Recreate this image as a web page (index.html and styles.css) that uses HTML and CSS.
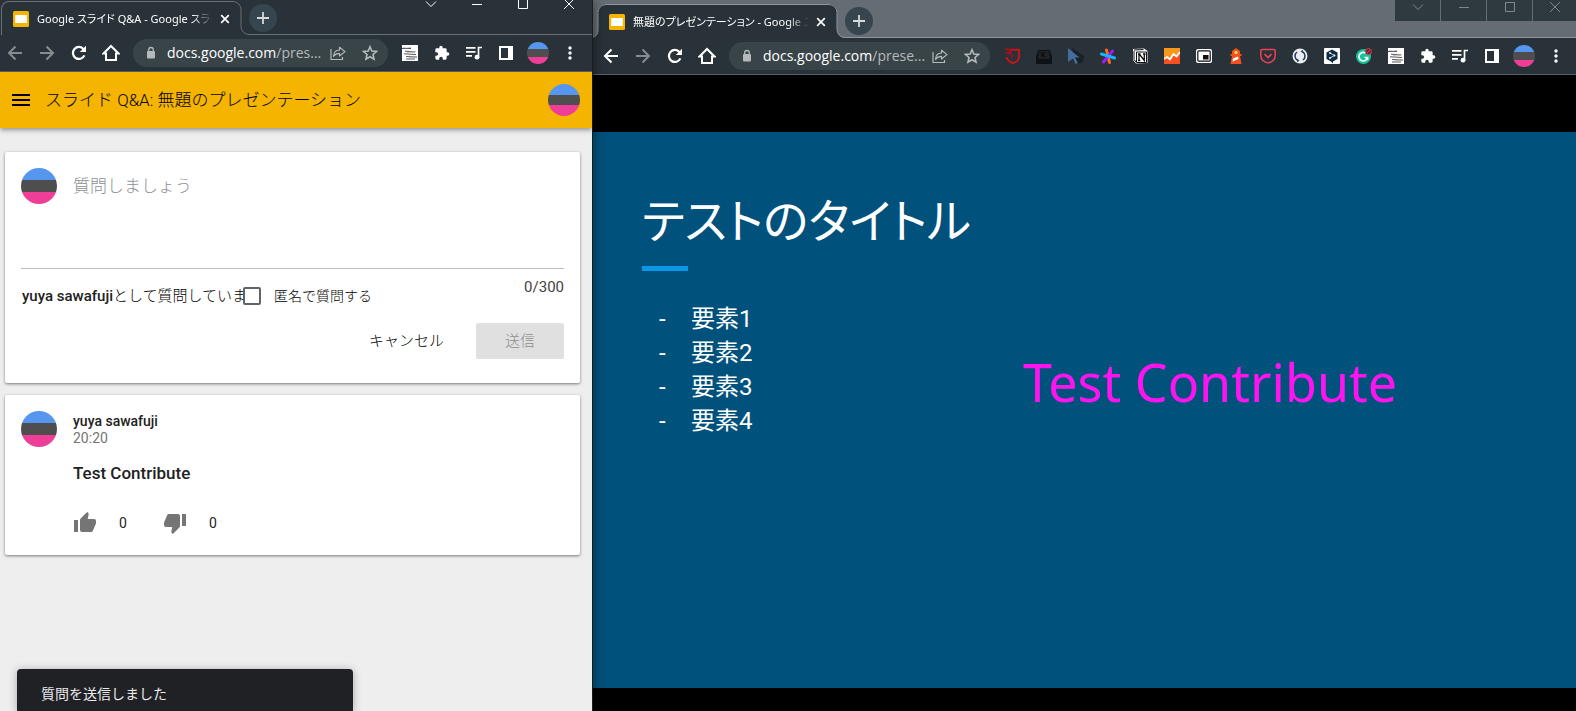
FILE: index.html
```html
<!DOCTYPE html>
<html lang="ja">
<head>
<meta charset="utf-8">
<title>スライド Q&amp;A</title>
<link rel="stylesheet" href="styles.css">
</head>
<body>
<svg class="sprite" aria-hidden="true">
  <symbol id="slides" viewBox="0 0 16 16"><rect width="16" height="16" rx="1.5" fill="#f5b400"/><rect x="2.2" y="4" width="11.6" height="8" fill="#fff"/></symbol>
  <symbol id="close" viewBox="0 0 10 10"><path d="M1.2 1.2l7.6 7.6M8.8 1.2L1.2 8.8" stroke="currentColor" stroke-width="1.7"/></symbol>
  <symbol id="plus" viewBox="0 0 12 12"><path d="M6 0v12M0 6h12" stroke="currentColor" stroke-width="1.8"/></symbol>
  <symbol id="back" viewBox="0 0 16 16"><path d="M15 8H2M8.5 1.5L2 8l6.500 6.500" fill="none" stroke="currentColor" stroke-width="2"/></symbol>
  <symbol id="forward" viewBox="0 0 16 16"><path d="M1 8h13M7.500 1.500L14 8l-6.500 6.500" fill="none" stroke="currentColor" stroke-width="2"/></symbol>
  <symbol id="reload" viewBox="0 0 16 16"><path d="M13.400 10.400A6 6 0 1 1 12.600 4.200" fill="none" stroke="currentColor" stroke-width="2.200"/><path d="M15 .8V7H8.800z" fill="currentColor"/></symbol>
  <symbol id="home" viewBox="0 0 18 18"><path d="M1.500 9.500L9 2l7.500 7.500H14V16H4V9.500z" fill="none" stroke="currentColor" stroke-width="2"/></symbol>
  <symbol id="lock" viewBox="0 0 10 14"><rect x="1" y="5" width="8" height="7.500" rx="1" fill="currentColor"/><path d="M2.700 6V3.800a2.300 2.300 0 0 1 4.600 0V6" fill="none" stroke="currentColor" stroke-width="1.300"/></symbol>
  <symbol id="share" viewBox="0 0 16 16"><path d="M1 4v10.500h11.500V12M9.500 2.300V5C5.500 5.200 3.700 8 3.500 11.300c1.500-2 3.200-2.900 6-2.900V11L15 6.600z" fill="none" stroke="currentColor" stroke-width="1.200" stroke-linejoin="round"/></symbol>
  <symbol id="star" viewBox="0 0 16 16"><path d="M8 1.800l1.800 4.300 4.700.4L11 9.500l1 4.600-4-2.400-4 2.400 1-4.600-3.500-3 4.700-.4z" fill="none" stroke="currentColor" stroke-width="1.600"/></symbol>
  <symbol id="sketch" viewBox="0 0 16 16"><rect width="16" height="16" fill="#fff"/><path d="M0 3.500h9M3 6.200l10 .8M2 8.800l12 .7M4 11.500l11 .6M4 14h9" stroke="#444" stroke-width=".9"/><path d="M1 2.500q4 1.300 8-.3M5 7.500l9-1M7 12.500l7-1" stroke="#999" stroke-width=".6" fill="none"/></symbol>
  <symbol id="puzzle" viewBox="0 0 24 24"><path fill="currentColor" d="M20.500 11H19V7a2 2 0 0 0-2-2h-4V3.500a2.500 2.500 0 0 0-5 0V5H4a2 2 0 0 0-2 2v3.800h1.500a2.700 2.700 0 0 1 0 5.400H2V20a2 2 0 0 0 2 2h3.800v-1.500a2.700 2.700 0 0 1 5.400 0V22H17a2 2 0 0 0 2-2v-4h1.500a2.500 2.500 0 0 0 0-5z"/></symbol>
  <symbol id="music" viewBox="0 0 16 14"><path d="M0 1.800h9.500M0 5.800h9.500M0 9.800h6M12.500 11.500V1.500H16" fill="none" stroke="currentColor" stroke-width="1.700"/><circle cx="11" cy="11.200" r="2.400" fill="currentColor"/></symbol>
  <symbol id="panel" viewBox="0 0 14 14"><path fill="currentColor" fill-rule="evenodd" d="M0 0h14v14H0zM2 2v10h7V2z"/></symbol>
  <symbol id="dots" viewBox="0 0 4 14"><g fill="currentColor"><circle cx="2" cy="2" r="1.700"/><circle cx="2" cy="7" r="1.700"/><circle cx="2" cy="12" r="1.700"/></g></symbol>
  <symbol id="w-down" viewBox="0 0 12 12"><path d="M1 3.500l5 5 5-5" fill="none" stroke="currentColor"/></symbol>
  <symbol id="w-min" viewBox="0 0 12 12"><path d="M1 6.500h10" stroke="currentColor"/></symbol>
  <symbol id="w-max" viewBox="0 0 12 12"><path d="M1.500 1.500h9v9h-9z" fill="none" stroke="currentColor"/></symbol>
  <symbol id="w-close" viewBox="0 0 12 12"><path d="M1 1l10 10M11 1L1 11" stroke="currentColor"/></symbol>
  <symbol id="thumb" viewBox="0 0 24 24"><path fill="currentColor" d="M1 21h4V9H1v12zm22-11a2 2 0 0 0-2-2h-6.300l.95-4.570.03-.32c0-.41-.17-.79-.44-1.060L14.170 1 7.590 7.590C7.220 7.950 7 8.450 7 9v10a2 2 0 0 0 2 2h9c.83 0 1.540-.5 1.840-1.220l3.020-7.050c.09-.23.140-.47.140-.73z"/></symbol>
</svg>

<div class="desktop">
  <section class="window qa">
    <header class="titlebar">
      <div class="tab">
        <svg class="i16"><use href="#slides"/></svg>
        <span class="tab-title">Google スライド Q&amp;A - Google スライド</span>
        <button class="tab-close" aria-label="タブを閉じる"><svg class="i10"><use href="#close"/></svg></button>
      </div>
      <svg class="tab-edge" viewBox="0 0 16 34"><path class="edge-fill" d="M0 0a8 8 0 0 1 8 8v18a8 8 0 0 0 8 8H0z"/><path class="edge-line" d="M0 .5a8 8 0 0 1 8 8V25.500a8 8 0 0 0 8 8"/></svg>
      <div class="strip"><button class="newtab" aria-label="新しいタブ"><svg class="i12"><use href="#plus"/></svg></button></div>
      <div class="controls">
        <button aria-label="タブを検索"><svg class="i12"><use href="#w-down"/></svg></button>
        <button aria-label="最小化"><svg class="i12"><use href="#w-min"/></svg></button>
        <button aria-label="最大化"><svg class="i12"><use href="#w-max"/></svg></button>
        <button aria-label="閉じる"><svg class="i12"><use href="#w-close"/></svg></button>
      </div>
    </header>
    <nav class="toolbar">
      <div class="group">
        <button class="dim" aria-label="戻る"><svg class="i16"><use href="#back"/></svg></button>
        <button class="dim" aria-label="進む"><svg class="i16"><use href="#forward"/></svg></button>
        <button aria-label="再読み込み"><svg class="i16"><use href="#reload"/></svg></button>
        <button aria-label="ホーム"><svg class="i18"><use href="#home"/></svg></button>
      </div>
      <div class="omnibox">
        <svg class="lock"><use href="#lock"/></svg>
        <span class="url"><b>docs.google.com</b>/pres...</span>
        <button aria-label="共有"><svg class="i16"><use href="#share"/></svg></button>
        <button aria-label="ブックマーク"><svg class="i16"><use href="#star"/></svg></button>
      </div>
      <div class="group">
        <button aria-label="スケッチ"><svg class="i16"><use href="#sketch"/></svg></button>
        <button aria-label="拡張機能"><svg class="i16"><use href="#puzzle"/></svg></button>
        <button aria-label="メディア"><svg class="i16"><use href="#music"/></svg></button>
        <button aria-label="サイドパネル"><svg class="i14"><use href="#panel"/></svg></button>
        <button aria-label="プロフィール"><span class="avatar s22"></span></button>
        <button aria-label="メニュー"><svg class="dots"><use href="#dots"/></svg></button>
      </div>
    </nav>
    <div class="appbar">
      <button class="burger" aria-label="メニュー"><svg viewBox="0 0 18 12"><path d="M0 1h18M0 6h18M0 11h18" stroke="#000" stroke-width="2"/></svg></button>
      <h1>スライド Q&amp;A: 無題のプレゼンテーション</h1>
      <span class="avatar s32"></span>
    </div>
    <main class="feed">
      <form class="card ask">
        <div class="compose">
          <span class="avatar s36"></span>
          <textarea placeholder="質問しましょう" aria-label="質問"></textarea>
        </div>
        <div class="meta">
          <span class="as"><b>yuya sawafuji</b>として質問しています</span>
          <label class="anon"><input type="checkbox">匿名で質問する</label>
          <span class="count">0/300</span>
        </div>
        <div class="actions">
          <button type="button" class="cancel">キャンセル</button>
          <button type="button" class="send" disabled>送信</button>
        </div>
      </form>
      <article class="card post">
        <span class="avatar s36"></span>
        <div class="post-body">
          <div class="author">yuya sawafuji</div>
          <div class="time">20:20</div>
          <p class="question">Test Contribute</p>
          <div class="votes">
            <button aria-label="賛成"><svg class="i24"><use href="#thumb"/></svg></button><span>0</span>
            <button aria-label="反対"><svg class="i24 flip"><use href="#thumb"/></svg></button><span>0</span>
          </div>
        </div>
      </article>
    </main>
    <div class="toast" role="status">質問を送信しました</div>
  </section>

  <section class="window present">
    <header class="titlebar">
      <svg class="tab-edge left" viewBox="0 0 14 34"><path class="edge-fill" d="M14 0a8 8 0 0 0-8 8v18a8 8 0 0 1-6 8H14z"/><path class="edge-line" d="M14 .5a8 8 0 0 0-8 8V25.500a8 8 0 0 1-6 8"/></svg>
      <div class="tab">
        <svg class="i16"><use href="#slides"/></svg>
        <span class="tab-title">無題のプレゼンテーション - Google スライド</span>
        <button class="tab-close" aria-label="タブを閉じる"><svg class="i10"><use href="#close"/></svg></button>
      </div>
      <svg class="tab-edge" viewBox="0 0 16 34"><path class="edge-fill" d="M0 0a8 8 0 0 1 8 8v18a8 8 0 0 0 8 8H0z"/><path class="edge-line" d="M0 .5a8 8 0 0 1 8 8V25.500a8 8 0 0 0 8 8"/></svg>
      <div class="strip"><button class="newtab" aria-label="新しいタブ"><svg class="i12"><use href="#plus"/></svg></button></div>
      <div class="controls">
        <button aria-label="タブを検索"><svg class="i12"><use href="#w-down"/></svg></button>
        <button aria-label="最小化"><svg class="i12"><use href="#w-min"/></svg></button>
        <button aria-label="最大化"><svg class="i12"><use href="#w-max"/></svg></button>
        <button aria-label="閉じる"><svg class="i12"><use href="#w-close"/></svg></button>
      </div>
    </header>
    <nav class="toolbar">
      <div class="group">
        <button aria-label="戻る"><svg class="i16"><use href="#back"/></svg></button>
        <button class="dim" aria-label="進む"><svg class="i16"><use href="#forward"/></svg></button>
        <button aria-label="再読み込み"><svg class="i16"><use href="#reload"/></svg></button>
        <button aria-label="ホーム"><svg class="i18"><use href="#home"/></svg></button>
      </div>
      <div class="omnibox">
        <svg class="lock"><use href="#lock"/></svg>
        <span class="url"><b>docs.google.com</b>/prese...</span>
        <button aria-label="共有"><svg class="i16"><use href="#share"/></svg></button>
        <button aria-label="ブックマーク"><svg class="i16"><use href="#star"/></svg></button>
      </div>
      <div class="group">
        <button aria-label="盾"><svg class="i16" viewBox="0 0 16 16"><path d="M6 1.700h9V9c0 3-3 5-6 6.200C6 14 3 12 2.500 9" fill="none" stroke="#c4141c" stroke-width="1.900"/><path d="M0 0l8 6V1zM0 4l7 4V4zM5 6l4 1v4z" fill="#a01020"/></svg></button>
        <button aria-label="キー"><svg class="i16" viewBox="0 0 16 16"><path d="M2.500 2h11L16 8v8H0V8z" fill="#0e1215"/><path d="M3 3h10l1 8H2z" fill="#1c2226"/><path d="M6 4v5M9 4L6.500 6.500 9 9" fill="none" stroke="#050607" stroke-width="1"/></svg></button>
        <button aria-label="カーソル"><svg class="i16" viewBox="0 0 16 16"><path d="M4 0l12 8-1 6-7 2z" fill="#1a2127"/><path d="M0 0l11.500 9.500H7l3 5.500-2.500 1L5 10.500 0 14z" fill="#456b9c"/></svg></button>
        <button aria-label="アスタリスク"><svg class="i16" viewBox="0 0 16 16"><g stroke-width="3" stroke-linecap="round"><path d="M6.500 2l3 12.500" stroke="#ff6a1a"/><path d="M12.500 3l-9 11" stroke="#a01cf5"/><path d="M1.500 6l13 4" stroke="#16b4ff"/></g></svg></button>
        <button aria-label="ノート"><svg class="i16" viewBox="0 0 16 16"><path d="M1 1l11-.5L15.500 3v12L4 15.500 1 12z" fill="#fff"/><path d="M2 2l9.500-.5M2 3v8.500l2 2.500" fill="none" stroke="#111"/><path d="M4.500 4H14.500v10.500H4.500z" fill="none" stroke="#111"/><path d="M6 6h2.500M11 6h2.500M7 6v6.500M6 12.500h2.300M7.300 6l5 6.500V6" fill="none" stroke="#111" stroke-width="1.300"/></svg></button>
        <button aria-label="分析"><svg class="i16" viewBox="0 0 16 16"><path d="M0 0h16v16H0z" fill="#f79a1c"/><path d="M0 11l3-2 3 3 4-6 2 2 4-5v13H0z" fill="#f4511e"/><path d="M0 11l3-2 3 2.500L9.500 6l3 2.500L16 4" fill="none" stroke="#fff" stroke-width="1.800"/></svg></button>
        <button aria-label="小窓"><svg class="i16" viewBox="0 0 16 16"><rect y="1" width="16" height="14" rx="2" fill="#fff"/><rect x="1.800" y="2.800" width="12.400" height="10.400" rx="1" fill="none" stroke="#111" stroke-width="1.200"/><rect x="7" y="7" width="5.500" height="4.500" fill="#111"/></svg></button>
        <button aria-label="灯台"><svg class="i16" viewBox="0 0 16 16"><path d="M4 3l4-3 4 3v3h1.500v2H12l1.500 8h-11L4 8H2.500V6H4z" fill="#f4511e"/><circle cx="8" cy="4.500" r="1.700" fill="#ffd54f"/><path d="M5 10.500l5-2 .6 2.500-6 2.500z" fill="#fff"/></svg></button>
        <button aria-label="ポケット"><svg class="i16" viewBox="0 0 16 16"><path d="M2 1.500h12q1.200 0 1.200 1.200V7.500a7.200 7.200 0 0 1-14.400 0V2.700Q.8 1.500 2 1.500z" fill="none" stroke="#ee4056" stroke-width="1.500"/><path d="M4.500 6.200L8 9.500l3.500-3.300" fill="none" stroke="#ee4056" stroke-width="1.700"/></svg></button>
        <button aria-label="回転"><svg class="i16" viewBox="0 0 16 16"><circle cx="8" cy="8" r="7.500" fill="#eceef2"/><path d="M5 4A5 5 0 0 0 5.500 12.300M11 12A5 5 0 0 0 10.500 3.700" fill="none" stroke="#1d3a63" stroke-width="1.500"/><path d="M11 2v3.200L8.500 3.300zM5 14v-3.200l2.500 1.900z" fill="#1d3a63"/></svg></button>
        <button aria-label="翻訳"><svg class="i16" viewBox="0 0 16 16"><rect width="16" height="16" rx="1" fill="#fff"/><path d="M8 1.500l5.500 3v6.500L9 13.500V15.500l-2-2L2.500 11V4.500z" fill="#0f2b46"/><path d="M6 5l4.500 2.500L6 10" fill="none" stroke="#fff" stroke-width=".8"/><g fill="#fff"><circle cx="6" cy="5" r=".9"/><circle cx="10.500" cy="7.500" r=".9"/><circle cx="6" cy="10" r=".9"/></g></svg></button>
        <button aria-label="文法"><svg class="i16" viewBox="0 0 16 16"><circle cx="7.500" cy="8.500" r="7.500" fill="#15c39a"/><path d="M9.500 5A4.300 4.300 0 1 0 11.500 9.500H8.500M11.500 9v3" fill="none" stroke="#fff" stroke-width="1.700"/><circle cx="12.500" cy="3.500" r="3" fill="#5a2c38" stroke="#e0324b"/><path d="M10.800 5.200l3.400-3.400" stroke="#e0324b"/></svg></button>
        <button aria-label="スケッチ"><svg class="i16"><use href="#sketch"/></svg></button>
        <button aria-label="拡張機能"><svg class="i16"><use href="#puzzle"/></svg></button>
        <button aria-label="メディア"><svg class="i16"><use href="#music"/></svg></button>
        <button aria-label="サイドパネル"><svg class="i14"><use href="#panel"/></svg></button>
        <button aria-label="プロフィール"><span class="avatar s22"></span></button>
        <button aria-label="メニュー"><svg class="dots"><use href="#dots"/></svg></button>
      </div>
    </nav>
    <main class="stage">
      <div class="slide">
        <div class="outline">
          <h2>テストのタイトル</h2>
          <ul><li>要素1</li><li>要素2</li><li>要素3</li><li>要素4</li></ul>
        </div>
        <p class="contribution">Test Contribute</p>
      </div>
    </main>
  </section>
</div>
</body>
</html>
```

FILE: styles.css
```css
* { box-sizing: border-box; }
body {
  margin: 0;
  font-family: Roboto, "Noto Sans CJK JP", sans-serif;
  color: #212121;
}
button {
  display: inline-flex;
  align-items: center;
  justify-content: center;
  padding: 0;
  border: 0;
  background: none;
  color: inherit;
  font: inherit;
}
svg { display: block; flex: none; }
h1, h2, p, ul { margin: 0; padding: 0; font-weight: 400; }
.sprite { position: absolute; width: 0; height: 0; }
.i10 { width: 10px; height: 10px; }
.i12 { width: 12px; height: 12px; }
.i14 { width: 14px; height: 14px; }
.i16 { width: 16px; height: 16px; }
.i18 { width: 18px; height: 18px; }
.i24 { width: 24px; height: 24px; }
.dots { width: 4px; height: 14px; }
.lock { width: 10px; height: 14px; }

.avatar {
  flex: none;
  border-radius: 50%;
  background: linear-gradient(#5696ee 33%, #4e4e4e 33% 67%, #ef3e98 67%);
}
.s22 { width: 22px; height: 22px; }
.s32 { width: 32px; height: 32px; }
.s36 { width: 36px; height: 36px; }

.desktop {
  display: grid;
  grid-template-columns: 592fr 984fr;
  height: 100vh;
  overflow: hidden;
}
.window {
  display: flex;
  flex-direction: column;
  min-width: 0;
  min-height: 0;
  --chrome: #283238;
  --line: #667076;
}
.qa {
  position: relative;
  z-index: 1;
  background: #eee;
  box-shadow: 0 0 12px rgba(0, 0, 0, .55), 1px 0 0 #20292e;
}

/* Browser chrome */
.titlebar {
  display: flex;
  background: var(--chrome);
  padding: 1px 0 0 1px;
  color: #fff;
}
.present { --line: #8d969b; }
.present .titlebar { background: #656c73; padding: 4px 0 0; }
.tab {
  display: flex;
  align-items: center;
  width: 232px;
  height: 34px;
  padding-left: 11px;
  border-top: 1px solid var(--line);
  border-left: 1px solid var(--line);
  border-top-left-radius: 8px;
  background: var(--chrome);
}
.present .tab { width: 223px; padding-left: 3px; border-left: 0; border-radius: 0; }
.tab-edge { width: 16px; height: 34px; }
.tab-edge.left { width: 14px; }
.edge-fill { fill: var(--chrome); }
.edge-line { fill: none; stroke: var(--line); }
.tab-title {
  flex: 1;
  min-width: 0;
  margin-left: 8px;
  overflow: hidden;
  white-space: nowrap;
  font: 11px/20px "Noto Sans", "Noto Sans CJK JP", sans-serif;
  font-feature-settings: "palt";
  -webkit-mask-image: linear-gradient(90deg, #000 88%, transparent);
  mask-image: linear-gradient(90deg, #000 88%, transparent);
}
.tab-close { width: 16px; height: 16px; margin-left: 4px; }
.strip {
  flex: 1;
  display: flex;
  align-items: center;
  border-bottom: 1px solid var(--line);
}
.newtab {
  width: 28px;
  height: 28px;
  border-radius: 50%;
  background: #37464e;
  color: #d5d9db;
}
.controls {
  display: flex;
  border-bottom: 1px solid var(--line);
}
.controls button { width: 46px; height: 6px; }
.present .controls { margin-top: -4px; gap: 1px; }
.present .controls button {
  width: 45px;
  height: 21px;
  padding-bottom: 8px;
  background: #2f3a40;
  color: #7f888d;
}
.present .controls button:last-child { width: 43px; }
.toolbar {
  display: flex;
  align-items: center;
  gap: 7px;
  height: 37px;
  padding-right: 7px;
  background: var(--chrome);
  border-bottom: 1px solid #596368;
  color: #fff;
}
.present .toolbar { padding: 0 5px 0 4px; }
.group { display: flex; gap: 2px; }
.group button { width: 30px; height: 30px; }
.dim { color: #868d91; }
.omnibox {
  flex: 1;
  display: flex;
  align-items: center;
  min-width: 0;
  height: 28px;
  padding: 0 3px 0 13px;
  border-radius: 14px;
  background: #394449;
  color: #b4b9bb;
}
.omnibox button { width: 30px; height: 28px; margin-left: 2px; }
.url {
  flex: 1;
  min-width: 0;
  margin-left: 11px;
  white-space: nowrap;
  font: 14px/20px "Open Sans", "Noto Sans", sans-serif;
}
.url b { font-weight: 400; color: #fff; }

/* Q&A page */
.appbar {
  display: flex;
  align-items: center;
  gap: 15px;
  padding: 12px;
  background: #f5b400;
  box-shadow: 0 2px 5px rgba(0, 0, 0, .4);
}
.burger, .burger svg { width: 18px; height: 12px; }
.appbar h1 { flex: 1; font-size: 17px; line-height: 24px; font-weight: 300; color: #000; }
.feed {
  flex: 1;
  display: flex;
  flex-direction: column;
  gap: 12px;
  padding: 24px 12px 0 5px;
}
.card {
  padding: 16px;
  border-radius: 2px;
  background: #fff;
  box-shadow: 0 1px 3px rgba(0, 0, 0, .5);
}
.compose {
  display: flex;
  gap: 16px;
  border-bottom: 1px solid #bdbdbd;
}
.compose textarea {
  flex: 1;
  height: 100px;
  padding: 6px 0;
  border: 0;
  outline: 0;
  resize: none;
  font: 300 17px/24px Roboto, "Noto Sans CJK JP", sans-serif;
}
.compose textarea::placeholder { color: #8e8e8e; }
.meta {
  display: flex;
  padding: 6px 0 0 1px;
  font-size: 15px;
  line-height: 24px;
}
.as {
  width: 221px;
  padding-top: 9px;
  overflow: hidden;
  white-space: nowrap;
  font-weight: 300;
  color: #000;
}
.as b { font-weight: 500; color: #212121; }
.anon {
  display: flex;
  align-items: center;
  gap: 13px;
  padding-top: 8px;
  font-size: 14px;
  font-weight: 300;
  color: #000;
}
.anon input {
  appearance: none;
  width: 18px;
  height: 18px;
  margin: 0;
  border: 2px solid #5f6368;
  border-radius: 2px;
}
.count { margin-left: auto; color: #424242; }
.actions {
  display: flex;
  justify-content: flex-end;
  gap: 16px;
  padding: 15px 0 8px;
  font-size: 15px;
  font-weight: 300;
}
.actions button { height: 36px; padding: 0 16px 3px; }
.actions .cancel { color: #000; }
.actions .send {
  width: 88px;
  border-radius: 2px;
  background: #e0e0e0;
  color: #8e8e8e;
}
.post { display: flex; gap: 16px; padding-bottom: 20px; }
.author { padding-top: 1px; font-size: 14px; line-height: 18px; font-weight: 500; }
.time { font-size: 14px; line-height: 17px; color: #757575; }
.question { padding: 14px 0 26px; font-size: 17px; line-height: 24px; font-weight: 500; }
.votes { display: flex; align-items: center; font-size: 14px; line-height: 24px; }
.votes button { color: #757575; }
.votes span { width: 44px; padding-left: 22px; margin-right: 22px; }
.flip { transform: rotate(180deg); }
.toast {
  position: absolute;
  left: 17px;
  bottom: 0;
  width: 336px;
  height: 42px;
  padding: 14px 24px;
  border-radius: 4px 4px 0 0;
  background: #202124;
  box-shadow: 0 1px 8px rgba(0, 0, 0, .3);
  color: #e8eaed;
  font-size: 14px;
  line-height: 22px;
}

/* Slide */
.stage { flex: 1; padding-top: 57px; background: #000; }
.slide {
  display: grid;
  grid-template-columns: 431fr 553fr;
  align-items: start;
  aspect-ratio: 984 / 556;
  background: #00517c;
  color: #fff;
}
.outline { padding: 58px 0 0 50px; }
.outline h2 {
  font-size: 47px;
  line-height: 64px;
  white-space: nowrap;
  font-feature-settings: "palt";
}
.outline h2::after {
  content: "";
  display: block;
  width: 46px;
  height: 5px;
  margin-top: 12px;
  background: #0a97e5;
}
.outline ul {
  padding: 31px 0 0 17px;
  list-style: none;
  font-size: 24px;
  line-height: 34px;
}
.outline li { display: flex; }
.outline li::before { content: "-"; width: 32px; }
.contribution {
  padding-top: 214px;
  font: 52px/72px "Noto Sans", sans-serif;
  color: #ff14f0;
}
```
